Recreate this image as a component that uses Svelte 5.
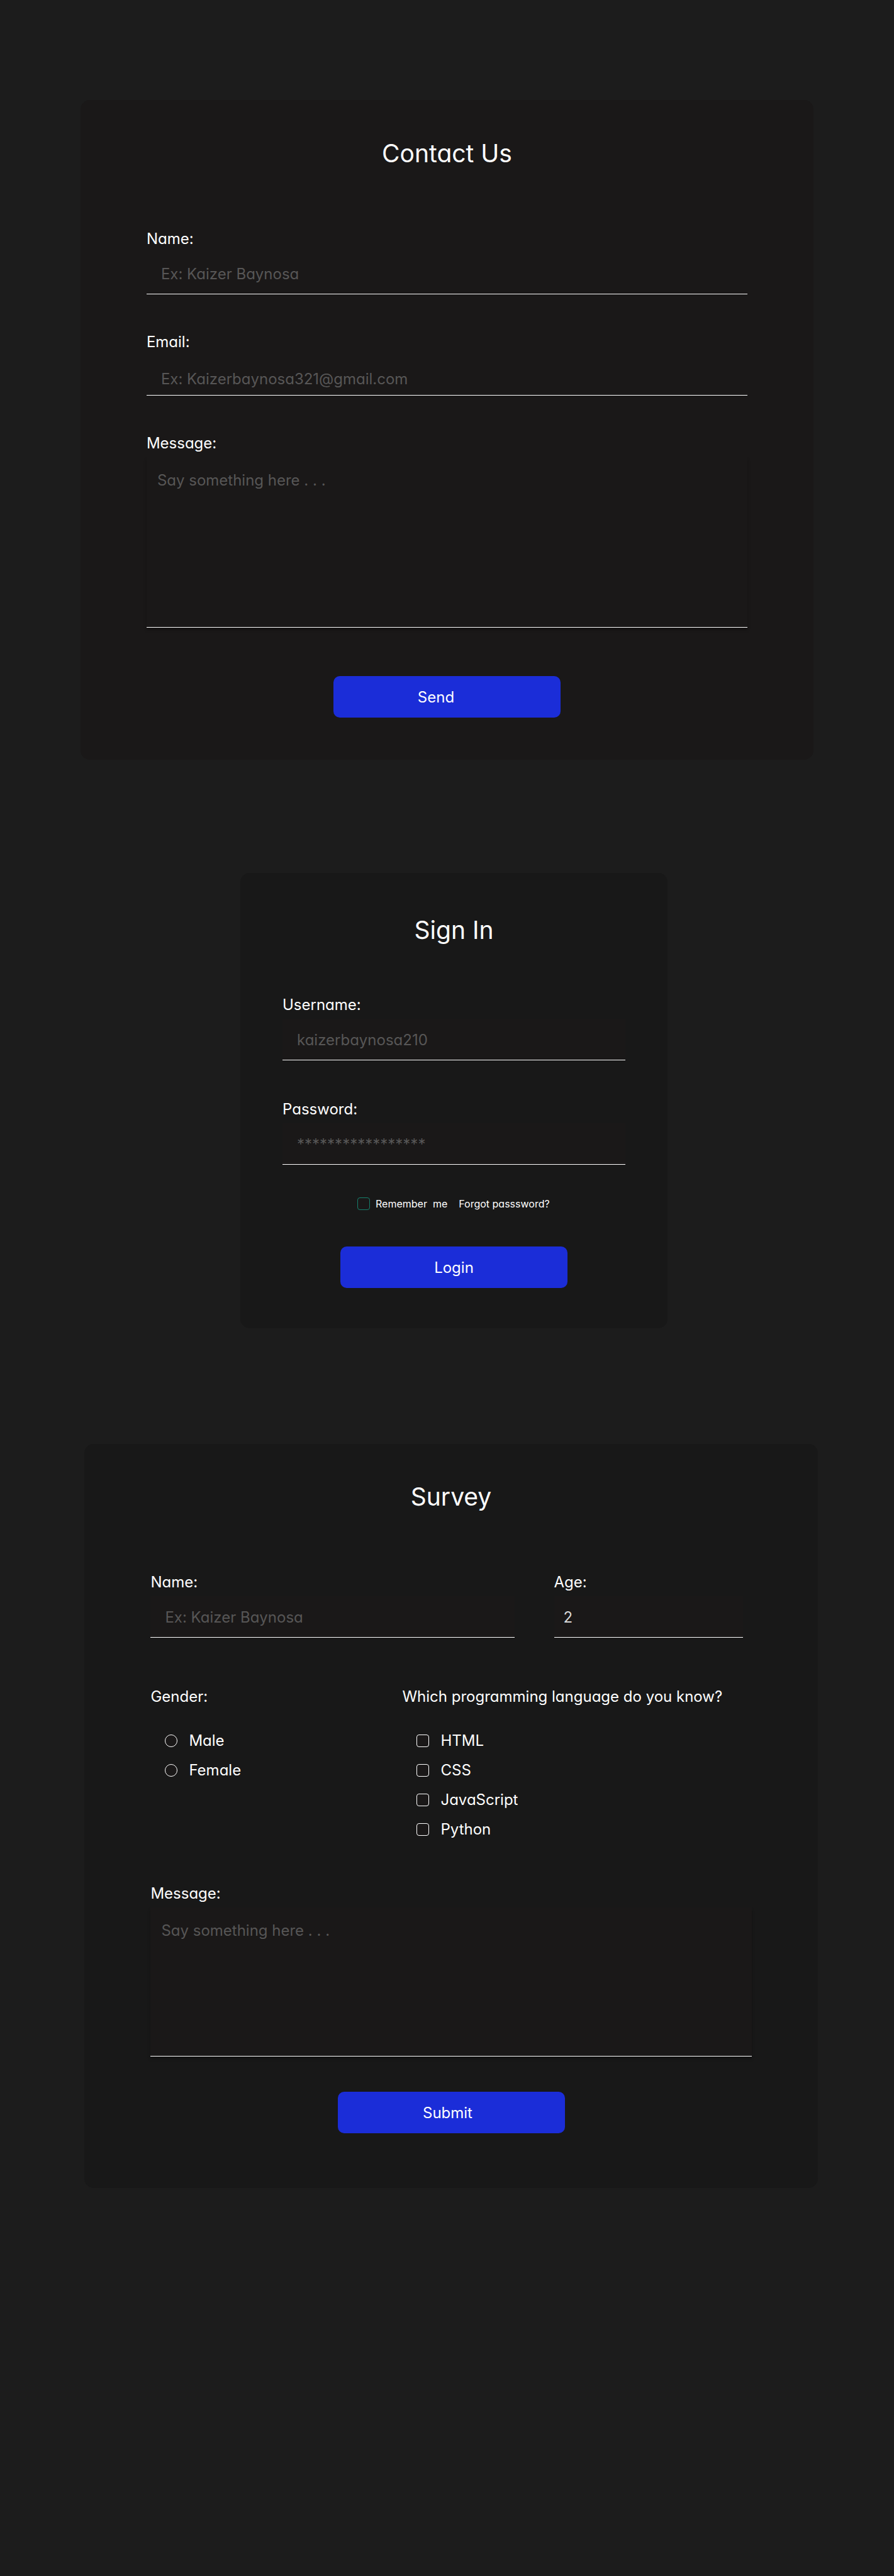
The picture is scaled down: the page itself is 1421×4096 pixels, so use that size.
<script>
  const genders = ['Male', 'Female'];
  const languages = ['HTML', 'CSS', 'JavaScript', 'Python'];
  const hold = (event) => event.preventDefault();
</script>

<main class="page">
  <form class="card contact" onsubmit={hold}>
    <h2>Contact Us</h2>
    <div class="field">
      <label for="contact-name">Name:</label>
      <input id="contact-name" type="text" placeholder="Ex: Kaizer Baynosa" />
    </div>
    <div class="field">
      <label for="contact-email">Email:</label>
      <input id="contact-email" class="short" type="email" placeholder="Ex: Kaizerbaynosa321@gmail.com" />
    </div>
    <div class="field">
      <label for="contact-message">Message:</label>
      <textarea id="contact-message" placeholder="Say something here . . ."></textarea>
    </div>
    <button class="send" type="submit">Send</button>
  </form>

  <form class="card signin" onsubmit={hold}>
    <h2>Sign In</h2>
    <div class="field">
      <label for="username">Username:</label>
      <input id="username" type="text" placeholder="kaizerbaynosa210" />
    </div>
    <div class="field">
      <label for="password">Password:</label>
      <input id="password" type="password" placeholder="*****************" />
    </div>
    <div class="extras">
      <label class="remember"><input class="tick teal" type="checkbox" /><span>Remember{'  '}me</span></label>
      <a href="#forgot">Forgot passsword?</a>
    </div>
    <button type="submit">Login</button>
  </form>

  <form class="card survey" onsubmit={hold}>
    <h2>Survey</h2>
    <div class="person">
      <div class="field">
        <label for="survey-name">Name:</label>
        <input id="survey-name" type="text" placeholder="Ex: Kaizer Baynosa" />
      </div>
      <div class="field">
        <label for="survey-age">Age:</label>
        <input id="survey-age" class="age" type="text" inputmode="numeric" value="2" />
      </div>
    </div>
    <div class="choices">
      <fieldset>
        <legend>Gender:</legend>
        <div class="options">
          {#each genders as gender}
            <label class="option"><input class="tick round" type="radio" name="gender" value={gender} />{gender}</label>
          {/each}
        </div>
      </fieldset>
      <fieldset>
        <legend>Which programming language do you know?</legend>
        <div class="options">
          {#each languages as language}
            <label class="option"><input class="tick" type="checkbox" name="language" value={language} />{language}</label>
          {/each}
        </div>
      </fieldset>
    </div>
    <div class="field">
      <label for="survey-message">Message:</label>
      <textarea id="survey-message" placeholder="Say something here . . ."></textarea>
    </div>
    <button class="submit" type="submit">Submit</button>
  </form>
</main>

<style>
  :global(body) {
    margin: 0;
    background: #1c1c1c;
  }

  .page {
    box-sizing: border-box;
    min-height: 100vh;
    padding: 159px 0 0;
    display: flex;
    flex-direction: column;
    align-items: center;
    background: #1c1c1c;
    color: #fff;
    font-family: Inter, 'Open Sans', sans-serif;
    font-feature-settings: 'cv11';
    font-size: 24px;
    line-height: 32px;
  }

  .card {
    box-sizing: border-box;
    width: 82%;
    padding: 61px 105px 67px;
    display: flex;
    flex-direction: column;
    border-radius: 15px;
    background: #181818;
  }

  .contact {
    background: #1a1818;
  }

  .signin {
    width: 679px;
    max-width: 100%;
    margin: 180px 0 184px 22px;
    padding: 67px 67px 64px;
  }

  .survey {
    margin-left: 13px;
    padding-top: 60px;
    padding-bottom: 87px;
  }

  h2 {
    margin: 0 0 96px;
    font-size: 39px;
    font-weight: 400;
    line-height: 48px;
    text-align: center;
  }

  .signin h2 {
    margin-bottom: 79px;
  }

  .field {
    display: flex;
    flex-direction: column;
    gap: 6px;
    min-width: 0;
  }

  .field + .field {
    margin-top: 60px;
  }

  .signin .field + .field {
    margin-top: 62px;
  }

  .person .field + .field {
    margin-top: 0;
  }

  .field input,
  textarea {
    box-sizing: border-box;
    width: 100%;
    height: 66px;
    margin: 0;
    padding: 2px 23px 0;
    border: 0;
    border-bottom: 1px solid #fff;
    border-radius: 0;
    outline: 0;
    background: #1a1818;
    color: #d9d9d9;
    font: inherit;
    font-feature-settings: inherit;
  }

  .field .short {
    height: 63px;
    padding-top: 10px;
  }

  .field .age {
    padding: 2px 15px 0;
  }

  textarea {
    display: block;
    height: 271px;
    padding: 21px 17px;
    resize: none;
    box-shadow: 0 4px 4px rgba(0, 0, 0, 0.25);
  }

  .survey textarea {
    height: 237px;
  }

  input::placeholder,
  textarea::placeholder {
    color: #575656;
    opacity: 1;
  }

  button {
    width: 361px;
    height: 66px;
    margin: 77px 0 0;
    padding: 2px 0 0;
    align-self: center;
    border: 0;
    border-radius: 10px;
    background: #1b2dd8;
    color: #fff;
    font: inherit;
    font-feature-settings: inherit;
    cursor: pointer;
  }

  .send {
    padding-right: 35px;
  }

  .signin button {
    margin-top: 58px;
  }

  .survey .submit {
    margin-top: 56px;
    padding-right: 11px;
  }

  .tick {
    appearance: none;
    box-sizing: border-box;
    flex: none;
    width: 20px;
    height: 20px;
    margin: 0;
    border: 1px solid #fff;
    border-radius: 4px;
    background: #1a1818;
  }

  .tick:checked {
    background: #1b2dd8;
  }

  .round {
    border-radius: 50%;
  }

  .teal {
    border-color: #167f6c;
  }

  .extras {
    display: flex;
    align-items: center;
    gap: 18px;
    margin-top: 52px;
    padding-left: 119px;
    font-size: 16px;
    line-height: 20px;
  }

  .remember {
    display: flex;
    align-items: center;
    gap: 9px;
    white-space: pre;
  }

  a {
    color: inherit;
    text-decoration: none;
    white-space: nowrap;
  }

  .person {
    display: grid;
    grid-template-columns: 578fr 300fr;
    gap: 63px;
    padding-right: 14px;
  }

  .choices {
    display: grid;
    grid-template-columns: 400fr 555fr;
    margin: 78px 0 70px;
  }

  fieldset {
    min-width: 0;
    margin: 0;
    padding: 0;
    border: 0;
  }

  legend {
    padding: 0;
    margin-bottom: 38px;
    white-space: nowrap;
  }

  .options {
    display: flex;
    flex-direction: column;
    gap: 15px;
    padding-left: 23px;
  }

  .option {
    display: flex;
    align-items: center;
    gap: 18px;
  }
</style>
